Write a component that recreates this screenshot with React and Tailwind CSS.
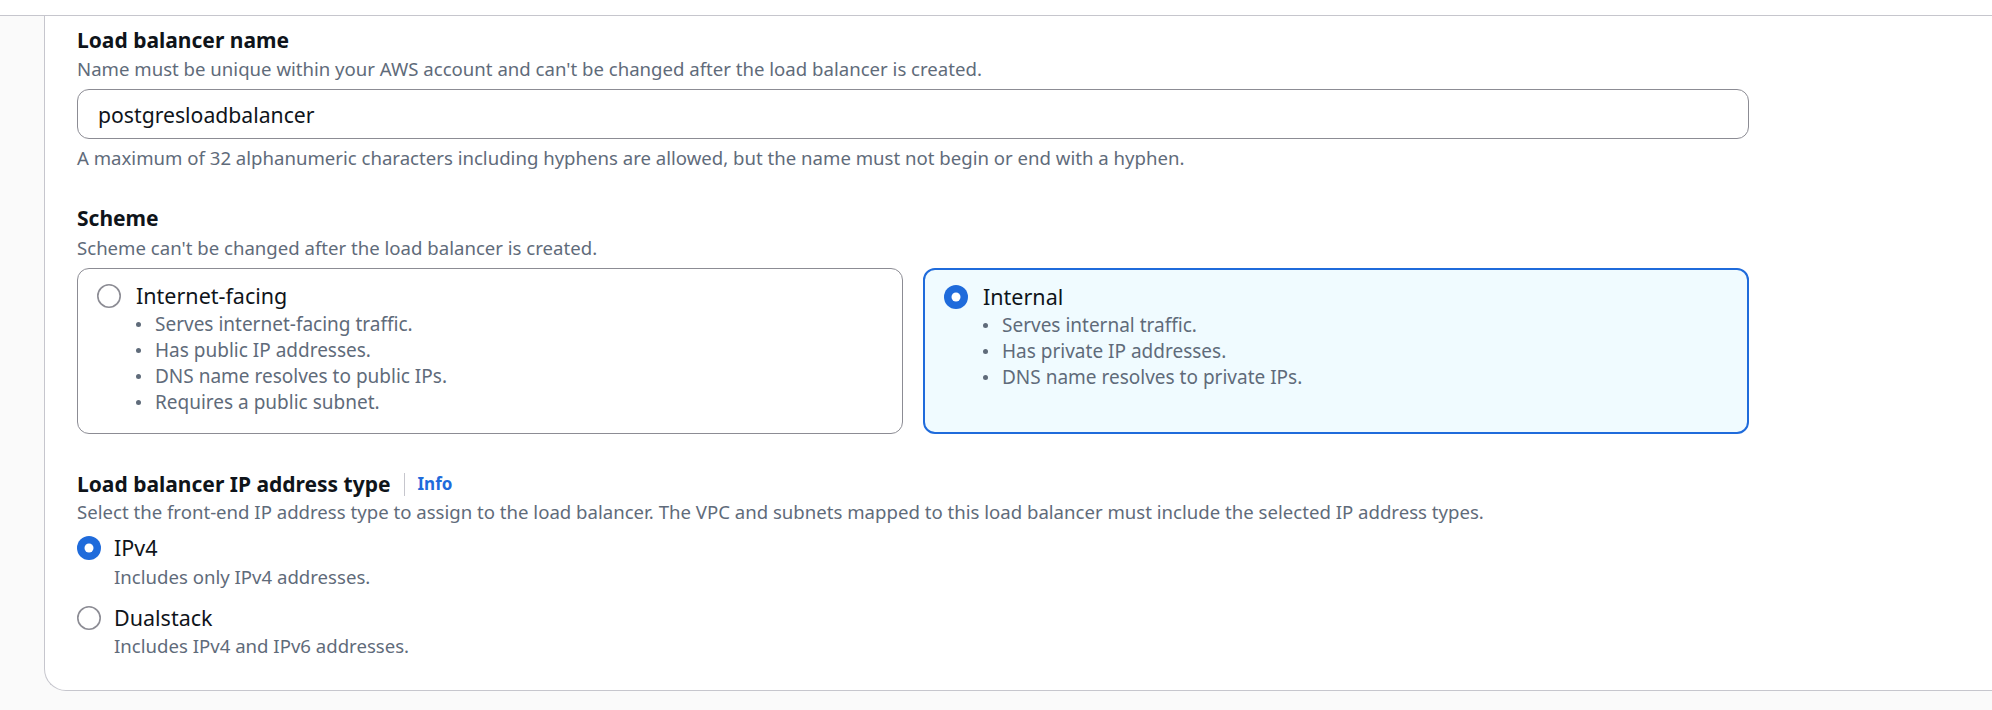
import { useState } from "react";

const FONT = "font-['Noto_Sans',sans-serif]";

function Radio({ checked }) {
  return checked ? (
    <svg width="24" height="24" viewBox="0 0 24 24" className="shrink-0">
      <circle cx="12" cy="12" r="12" fill="#1f6bdb" />
      <circle cx="12" cy="12" r="4.5" fill="#ffffff" />
    </svg>
  ) : (
    <svg width="24" height="24" viewBox="0 0 24 24" className="shrink-0">
      <circle cx="12" cy="12" r="11.2" fill="#ffffff" stroke="#8c8c94" strokeWidth="1.6" />
    </svg>
  );
}

function SchemeCard({ title, bullets, selected, onSelect }) {
  return (
    <div
      onClick={onSelect}
      className={`cursor-pointer rounded-[12px] pb-[18px] pl-[19px] pt-[13px] ${
        selected ? "border-2 border-[#1f6bdb] bg-[#f0fbff]" : "border border-[#8c8c94] bg-white"
      }`}
    >
      <div className="flex items-center gap-[15px]">
        <Radio checked={selected} />
        <span className="text-[21.5px] leading-[28px] text-[#0f141a]">{title}</span>
      </div>
      <ul className="ml-[39px] mt-[1px]">
        {bullets.map((b) => (
          <li key={b} className="flex items-center text-[19px] leading-[26px] text-[#5f6b7a]">
            <span className="mr-[14px] h-[5px] w-[5px] rounded-full bg-[#5f6b7a]" />
            {b}
          </li>
        ))}
      </ul>
    </div>
  );
}

export default function App() {
  const [name, setName] = useState("postgresloadbalancer");
  const [scheme, setScheme] = useState("internal");
  const [ipType, setIpType] = useState("ipv4");

  return (
    <div className={`min-h-[710px] bg-[#fafafa] ${FONT}`}>
      <div className="h-[16px] border-b border-[#c6c6cd] bg-white" />
      <div className="pl-[44px]">
        <div className="rounded-bl-[22px] border-b border-l border-[#c6c6cd] bg-white pb-[32px] pl-[32px] pt-[10px]">
          <div className="w-[1672px]">
            <h3 className="text-[21px] font-bold leading-[28px] text-[#0f141a]">Load balancer name</h3>
            <p className="mt-[3px] text-[18.6px] leading-[24px] text-[#5f6b7a]">
              Name must be unique within your AWS account and can't be changed after the load balancer is created.
            </p>
            <input
              value={name}
              onChange={(e) => setName(e.target.value)}
              className="mt-[8px] h-[50px] w-full rounded-[12px] border border-[#8c8c94] bg-white px-[20px] text-[21.2px] text-[#0f141a] outline-none"
            />
            <p className="mt-[7px] text-[18.6px] leading-[24px] text-[#5f6b7a]">
              A maximum of 32 alphanumeric characters including hyphens are allowed, but the name must not begin or end with a hyphen.
            </p>

            <h3 className="mt-[34px] text-[21px] font-bold leading-[28px] text-[#0f141a]">Scheme</h3>
            <p className="mt-[4px] text-[18.6px] leading-[24px] text-[#5f6b7a]">
              Scheme can't be changed after the load balancer is created.
            </p>
            <div className="mt-[8px] grid grid-cols-2 gap-[20px]">
              <SchemeCard
                title="Internet-facing"
                selected={scheme === "internet"}
                onSelect={() => setScheme("internet")}
                bullets={[
                  "Serves internet-facing traffic.",
                  "Has public IP addresses.",
                  "DNS name resolves to public IPs.",
                  "Requires a public subnet.",
                ]}
              />
              <SchemeCard
                title="Internal"
                selected={scheme === "internal"}
                onSelect={() => setScheme("internal")}
                bullets={["Serves internal traffic.", "Has private IP addresses.", "DNS name resolves to private IPs."]}
              />
            </div>

            <div className="mt-[36px] flex items-center">
              <h3 className="text-[21px] font-bold leading-[28px] text-[#0f141a]">Load balancer IP address type</h3>
              <span className="mx-[13px] h-[23px] w-px bg-[#c6c6cd]" />
              <a className="cursor-pointer text-[17px] font-bold leading-[28px] text-[#1f6bdb]">Info</a>
            </div>
            <p className="mt-[2px] text-[18.6px] leading-[24px] text-[#5f6b7a]">
              Select the front-end IP address type to assign to the load balancer. The VPC and subnets mapped to this load balancer must include the selected IP address types.
            </p>

            <div className="mt-[10px] cursor-pointer" onClick={() => setIpType("ipv4")}>
              <div className="flex items-center gap-[13px]">
                <Radio checked={ipType === "ipv4"} />
                <span className="text-[21.5px] leading-[28px] text-[#0f141a]">IPv4</span>
              </div>
              <p className="ml-[37px] mt-[3px] text-[18.6px] leading-[24px] text-[#5f6b7a]">Includes only IPv4 addresses.</p>
            </div>
            <div className="mt-[15px] cursor-pointer" onClick={() => setIpType("dualstack")}>
              <div className="flex items-center gap-[13px]">
                <Radio checked={ipType === "dualstack"} />
                <span className="text-[21.5px] leading-[28px] text-[#0f141a]">Dualstack</span>
              </div>
              <p className="ml-[37px] mt-[2px] text-[18.6px] leading-[24px] text-[#5f6b7a]">Includes IPv4 and IPv6 addresses.</p>
            </div>
          </div>
        </div>
      </div>
    </div>
  );
}
